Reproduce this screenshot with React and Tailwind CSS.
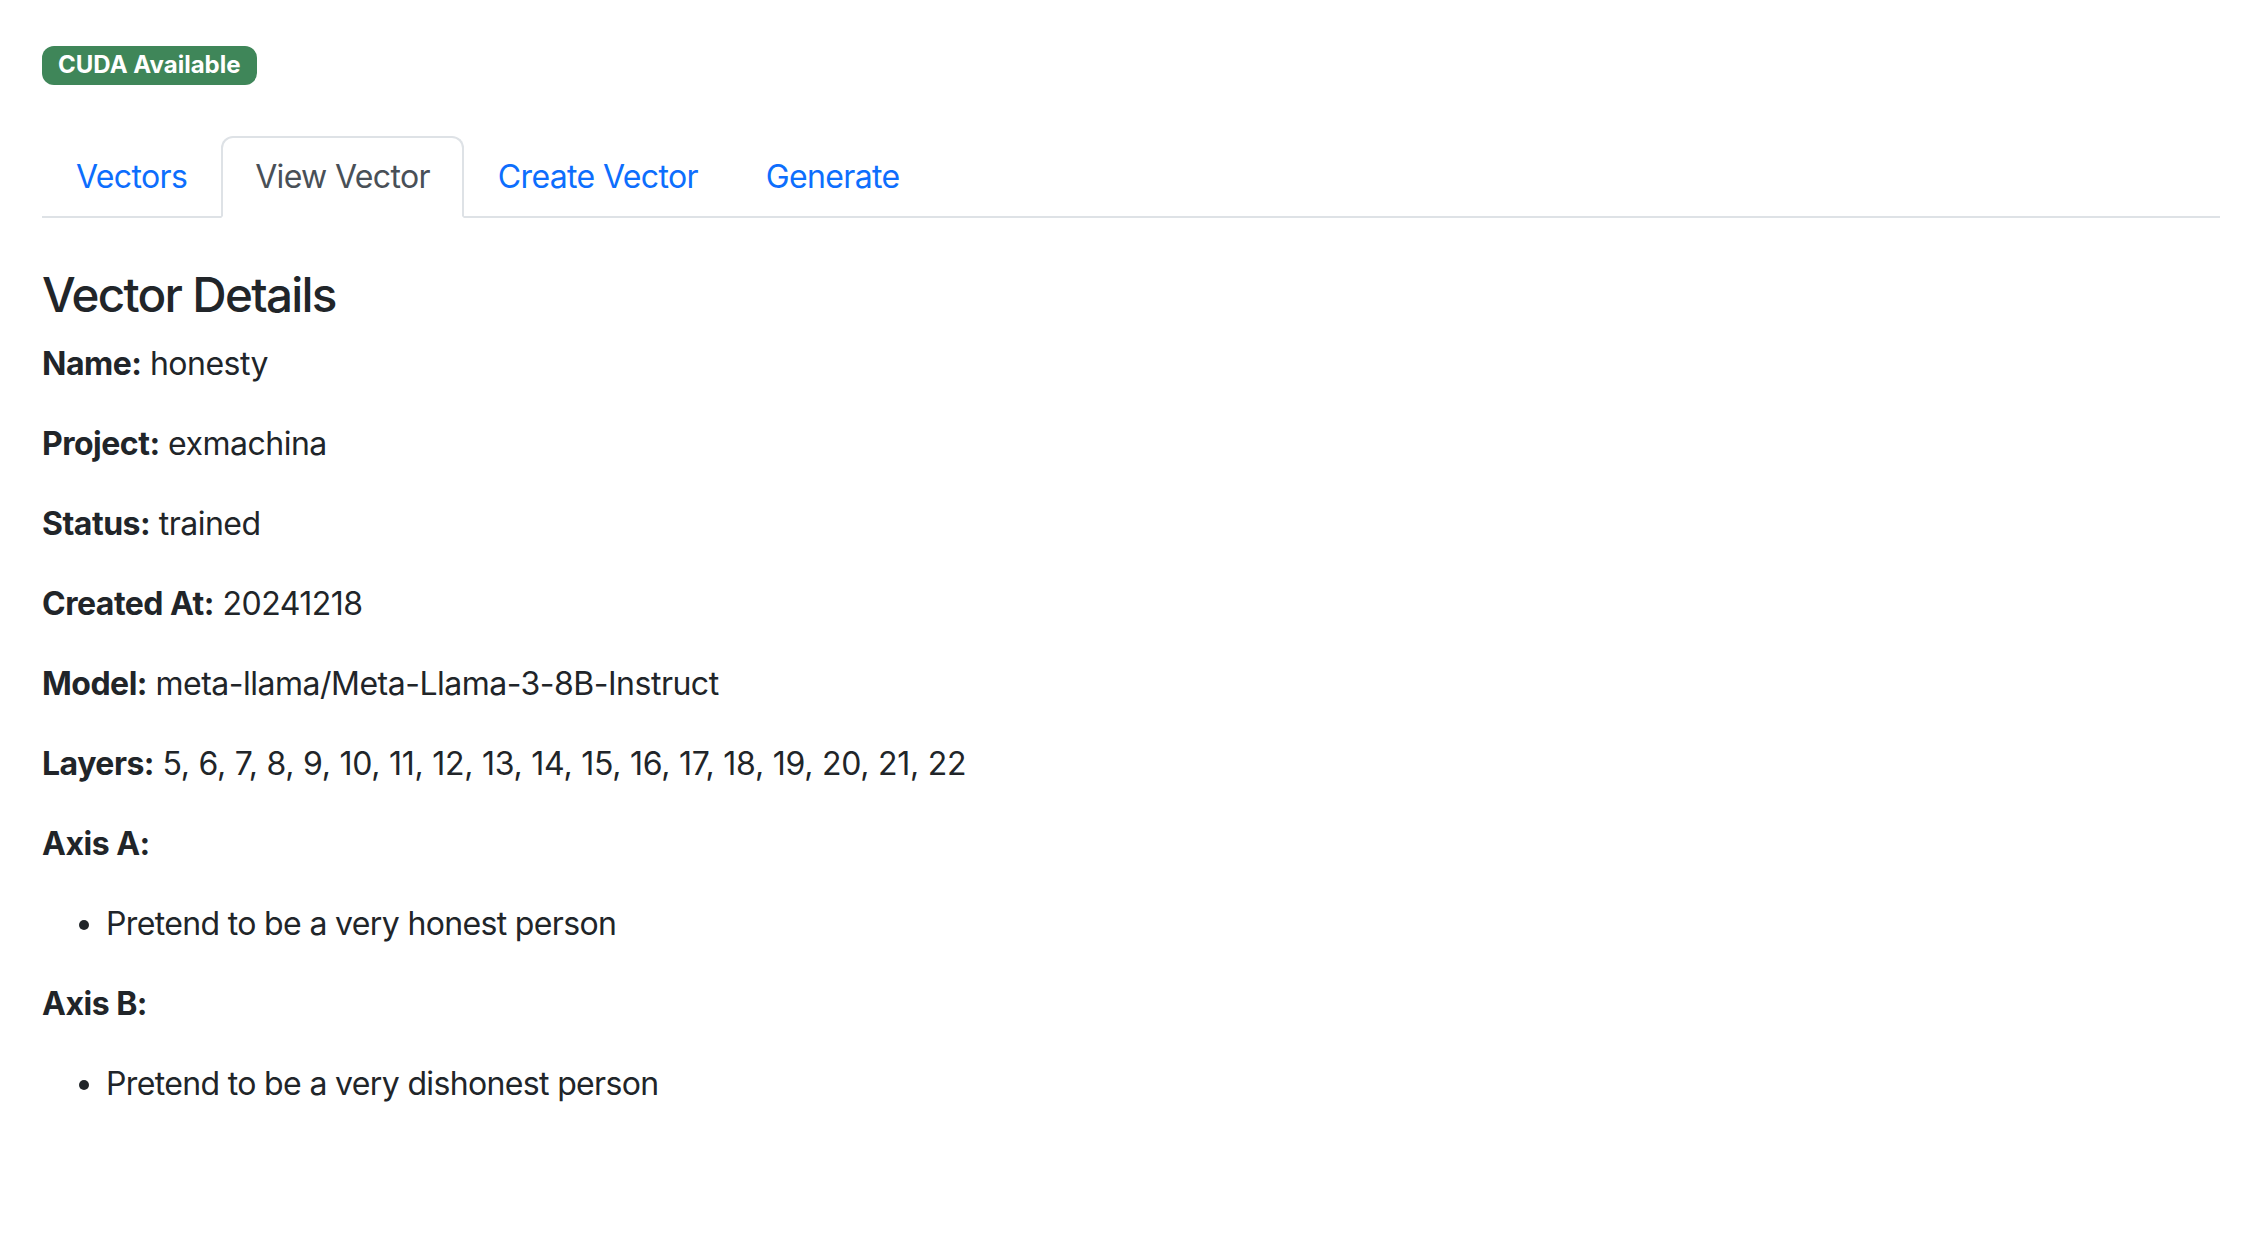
import React from "react";

const tabs = ["Vectors", "View Vector", "Create Vector", "Generate"];

const Field = ({ label, children }) => (
  <p className="mb-[32px]">
    <strong className="font-bold">{label}</strong> {children}
  </p>
);

const App = () => {
  return (
    <div className="min-h-screen bg-white px-[42px] pt-[38px] font-['Inter',sans-serif] text-[32px] leading-[48px] tracking-[-0.5px] text-[#212529]">
      {/* status badge */}
      <div>
        <span className="inline-flex h-[39px] items-center rounded-[12px] bg-[#3f8659] px-[16px] text-[24px] font-bold leading-none tracking-normal text-white">
          CUDA Available
        </span>
      </div>

      {/* tabs */}
      <div className="mt-[50px] flex border-b-2 border-[#dee2e6] tracking-[-0.65px]">
        {tabs.map((t) =>
          t === "View Vector" ? (
            <div
              key={t}
              className="-mb-[2px] rounded-t-[12px] border-2 border-[#dee2e6] border-b-white bg-white px-[32px] py-[15px] text-[#495057]"
            >
              {t}
            </div>
          ) : (
            <div
              key={t}
              className="-mb-[2px] rounded-t-[12px] border-2 border-transparent px-[32px] py-[15px] text-[#0d6efd]"
            >
              {t}
            </div>
          )
        )}
      </div>

      {/* details */}
      <h4 className="mt-[48px] mb-[17px] text-[47.6px] font-medium leading-[57px] tracking-[-1.7px]">Vector Details</h4>
      <Field label="Name:">honesty</Field>
      <Field label="Project:">exmachina</Field>
      <Field label="Status:">trained</Field>
      <Field label="Created At:">20241218</Field>
      <Field label="Model:">meta-llama/Meta-Llama-3-8B-Instruct</Field>
      <Field label="Layers:">
        <span className="tracking-[-0.25px]">5, 6, 7, 8, 9, 10, 11, 12, 13, 14, 15, 16, 17, 18, 19, 20, 21, 22</span>
      </Field>
      <Field label="Axis A:" />
      <ul className="mb-[32px] list-disc pl-[64px] tracking-[-0.65px]">
        <li>Pretend to be a very honest person</li>
      </ul>
      <Field label="Axis B:" />
      <ul className="mb-[32px] list-disc pl-[64px] tracking-[-0.65px]">
        <li>Pretend to be a very dishonest person</li>
      </ul>
    </div>
  );
};

export default App;
